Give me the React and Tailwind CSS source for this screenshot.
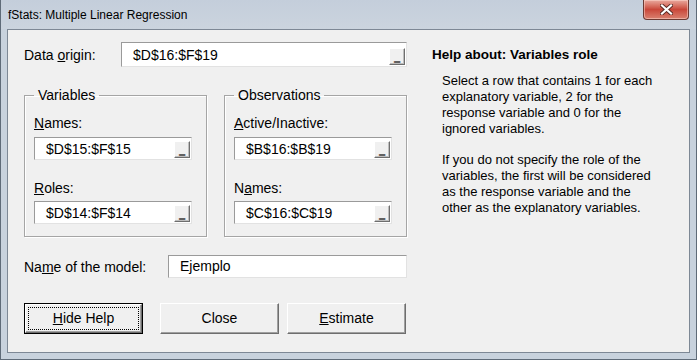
import React from 'react'

const font = "font-['Liberation_Sans',Arial,sans-serif]"

function PickButton() {
  return (
    <div className="mb-px mr-px flex h-[17px] w-[16px] shrink-0 items-end justify-center self-end border border-t-white border-l-white border-r-[#6e6e6e] border-b-[#6e6e6e] bg-[#f0f0f0] pb-[2px] shadow-[inset_-1px_-1px_0_#bdbdbd]">
      <span className="block h-[7px] scale-x-[0.75] text-[15px] font-bold leading-[0px] text-black [text-shadow:0_1px_0_#000]">_</span>
    </div>
  )
}

function RangeInput({ value, className = '' }) {
  return (
    <div className={`flex border border-t-[#9a9a9a] border-l-[#9a9a9a] border-r-[#e2e2e2] border-b-[#e2e2e2] bg-white ${className}`}>
      <span className="flex-1 self-center pl-[11px] text-[14px] leading-[18px] text-black">{value}</span>
      <PickButton />
    </div>
  )
}

function GroupBox({ title, children }) {
  return (
    <fieldset className="w-[183px] border border-[#a5a5a5] px-[9px] pb-[12px] shadow-[1px_1px_0_#fff,inset_1px_1px_0_#fff]">
      <legend className="px-[4px] text-[14px] leading-[18px] text-black">{title}</legend>
      {children}
    </fieldset>
  )
}

function Field({ label, value, first }) {
  return (
    <div className={first ? 'mt-[10px]' : 'mt-[19px]'}>
      <div className="text-[14px] leading-[18px] text-black">{label}</div>
      <RangeInput value={value} className={`h-[23px] w-[158px] ${first ? 'mt-[5px]' : 'mt-[4px]'}`} />
    </div>
  )
}

function Button({ children, isDefault }) {
  if (isDefault) {
    return (
      <div className="h-[31px] w-[119px] border border-black">
        <div className="flex h-full w-full items-center justify-center border border-t-white border-l-white border-r-[#6e6e6e] border-b-[#6e6e6e] bg-[#f0f0f0] p-[2px] shadow-[inset_-1px_-1px_0_#a0a0a0]">
          <div className="flex h-full w-full items-center justify-center border border-dotted border-black text-[14px] text-black">
            {children}
          </div>
        </div>
      </div>
    )
  }
  return (
    <div className="flex h-[31px] w-[119px] items-center justify-center border border-t-white border-l-white border-r-[#6e6e6e] border-b-[#6e6e6e] bg-[#f0f0f0] text-[14px] text-black shadow-[inset_-1px_-1px_0_#a0a0a0]">
      {children}
    </div>
  )
}

function CloseGlyph() {
  return (
    <svg width="13" height="11" viewBox="0 0 13 11">
      <path d="M2 1.5 L11 9.5 M11 1.5 L2 9.5" stroke="#5a2a24" strokeWidth="4" strokeLinecap="square" />
      <path d="M2 1.5 L11 9.5 M11 1.5 L2 9.5" stroke="#ffffff" strokeWidth="2.2" strokeLinecap="square" />
    </svg>
  )
}

export default function App() {
  return (
    <div className={`flex h-[360px] w-[697px] flex-col border-x border-b border-[#5f6b78] bg-[#c8d2dd] ${font}`}>
      <div className="flex h-[29px] shrink-0 items-start justify-between bg-gradient-to-b from-[#c4cedb] to-[#cbd4de]">
        <span className="pl-[7px] pt-[7px] text-[12px] leading-[16px] text-black">fStats: Multiple Linear Regression</span>
        <div className="mr-[7px] flex h-[20px] w-[46px] items-center justify-center rounded-b-[4px] border border-t-0 border-[#6b3a33] bg-gradient-to-b from-[#e8a99f] via-[#c9473a] to-[#d9806f] shadow-[inset_0_0_0_1px_rgba(255,220,210,0.5)]">
          <CloseGlyph />
        </div>
      </div>

      <div className="mx-[6px] mb-[6px] flex flex-1 border border-[#7d8895] bg-[#f0f0f0]">
        <div className="w-[400px] shrink-0 pl-[16px] pt-[12px]">
          <div className="flex h-[25px] w-[383px] items-center">
            <span className="w-[97px] text-[14px] leading-[18px] text-black">Data <u>o</u>rigin:</span>
            <RangeInput value="$D$16:$F$19" className="h-[25px] flex-1" />
          </div>

          <div className="mt-[19px] flex w-[383px] justify-between">
            <GroupBox title="Variables">
              <Field label={<><u>N</u>ames:</>} value="$D$15:$F$15" first />
              <Field label={<><u>R</u>oles:</>} value="$D$14:$F$14" />
            </GroupBox>
            <GroupBox title="Observations">
              <Field label={<><u>A</u>ctive/Inactive:</>} value="$B$16:$B$19" first />
              <Field label={<>N<u>a</u>mes:</>} value="$C$16:$C$19" />
            </GroupBox>
          </div>

          <div className="mt-[18px] flex h-[23px] w-[383px] items-center">
            <span className="w-[144px] text-[14px] leading-[18px] text-black">Na<u>m</u>e of the model:</span>
            <div className="flex h-[23px] flex-1 items-center border border-t-[#9a9a9a] border-l-[#9a9a9a] border-r-[#e2e2e2] border-b-[#e2e2e2] bg-white pl-[11px] text-[14px] text-black">
              Ejemplo
            </div>
          </div>

          <div className="mt-[25px] flex w-[383px] items-center">
            <Button isDefault><span><u>H</u>ide Help</span></Button>
            <div className="ml-[17px]"><Button>Close</Button></div>
            <div className="ml-[8px]"><Button><span><u>E</u>stimate</span></Button></div>
          </div>
        </div>

        <div className="flex-1 pl-[24px] pt-[17px] text-black">
          <div className="text-[13.5px] font-bold leading-[16px]">Help about: Variables role</div>
          <div className="mt-[10px] pl-[10px] text-[13px] leading-[16px]">
            <p>
              Select a row that contains 1 for each<br />
              explanatory variable, 2 for the<br />
              response variable and 0 for the<br />
              ignored variables.
            </p>
            <p className="mt-[15px]">
              If you do not specify the role of the<br />
              variables, the first will be considered<br />
              as the response variable and the<br />
              other as the explanatory variables.
            </p>
          </div>
        </div>
      </div>
    </div>
  )
}
